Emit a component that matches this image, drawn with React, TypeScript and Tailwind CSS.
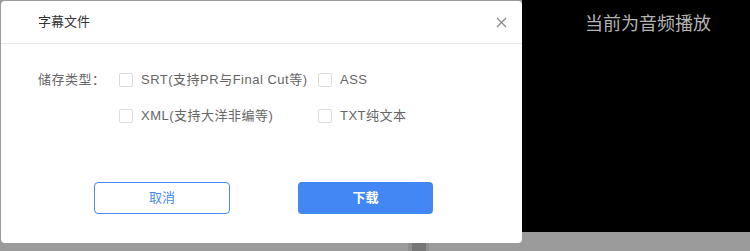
import { useState } from 'react'

const options = [
    ['srt', 'SRT(支持PR与Final Cut等)'],
    ['ass', 'ASS'],
    ['xml', 'XML(支持大洋非编等)'],
    ['txt', 'TXT纯文本'],
]

const App = () => {
    const [checked, setChecked] = useState<string[]>([])
    const toggle = (key: string) =>
        setChecked((prev) => (prev.includes(key) ? prev.filter((k) => k !== key) : [...prev, key]))

    return (
        <div
            className="flex w-[750px] h-[251px] bg-[#9b9b9b] overflow-hidden"
            style={{ fontFamily: '"Liberation Sans", "Noto Sans CJK SC", sans-serif' }}
        >
            <div className="flex flex-col w-[522px] pl-px pt-px">
                <div className="w-[521px] h-[242px] bg-white rounded-[4px] flex flex-col">
                    <div className="h-[43px] border-b border-[#e8e8e8] flex items-center justify-between pl-[37px] pr-[15px]">
                        <span className="text-[13px] text-[#333]">字幕文件</span>
                        <svg width="11" height="11" viewBox="0 0 11 11">
                            <path d="M1 1L10 10M10 1L1 10" stroke="#8a8a8a" strokeWidth="1.3" />
                        </svg>
                    </div>
                    <div className="flex pl-[37px] pt-[27px]">
                        <span className="text-[13px] text-[#666] leading-[18px] w-[81px] tracking-[0.5px]">储存类型：</span>
                        <div className="grid grid-cols-[199px_1fr] gap-y-[18px]">
                            {options.map(([key, label]) => (
                                <label
                                    key={key}
                                    className="flex items-center gap-[8px] h-[18px] cursor-pointer"
                                    onClick={() => toggle(key)}
                                >
                                    <span
                                        className={`w-[14px] h-[14px] rounded-[2px] border ${
                                            checked.includes(key) ? 'border-[#4387f5] bg-[#4387f5]' : 'border-[#dcdcdc] bg-white'
                                        }`}
                                    />
                                    <span className="text-[13px] text-[#666] tracking-[0.5px]">{label}</span>
                                </label>
                            ))}
                        </div>
                    </div>
                    <div className="flex gap-[68px] pl-[93px] mt-[57px]">
                        <button className="w-[136px] h-[32px] rounded-[4px] border border-[#4a8af4] text-[#4a8af4] text-[13px] bg-white">
                            取消
                        </button>
                        <button className="w-[135px] h-[32px] rounded-[4px] bg-[#4387f5] text-white text-[13px] font-bold">
                            下载
                        </button>
                    </div>
                </div>
                <div className="flex pl-[407px]">
                    <div className="w-[21px] h-[8px] bg-[#8f8f8f] flex justify-center">
                        <div className="w-[14px] h-[8px] bg-[#767676]" />
                    </div>
                </div>
            </div>
            <div className="flex-1 h-[232px] bg-black flex justify-center pl-[24px] pt-[11px]">
                <span className="text-[18px] text-[#b4b4b4] leading-[26px]">当前为音频播放</span>
            </div>
        </div>
    )
}

export default App
